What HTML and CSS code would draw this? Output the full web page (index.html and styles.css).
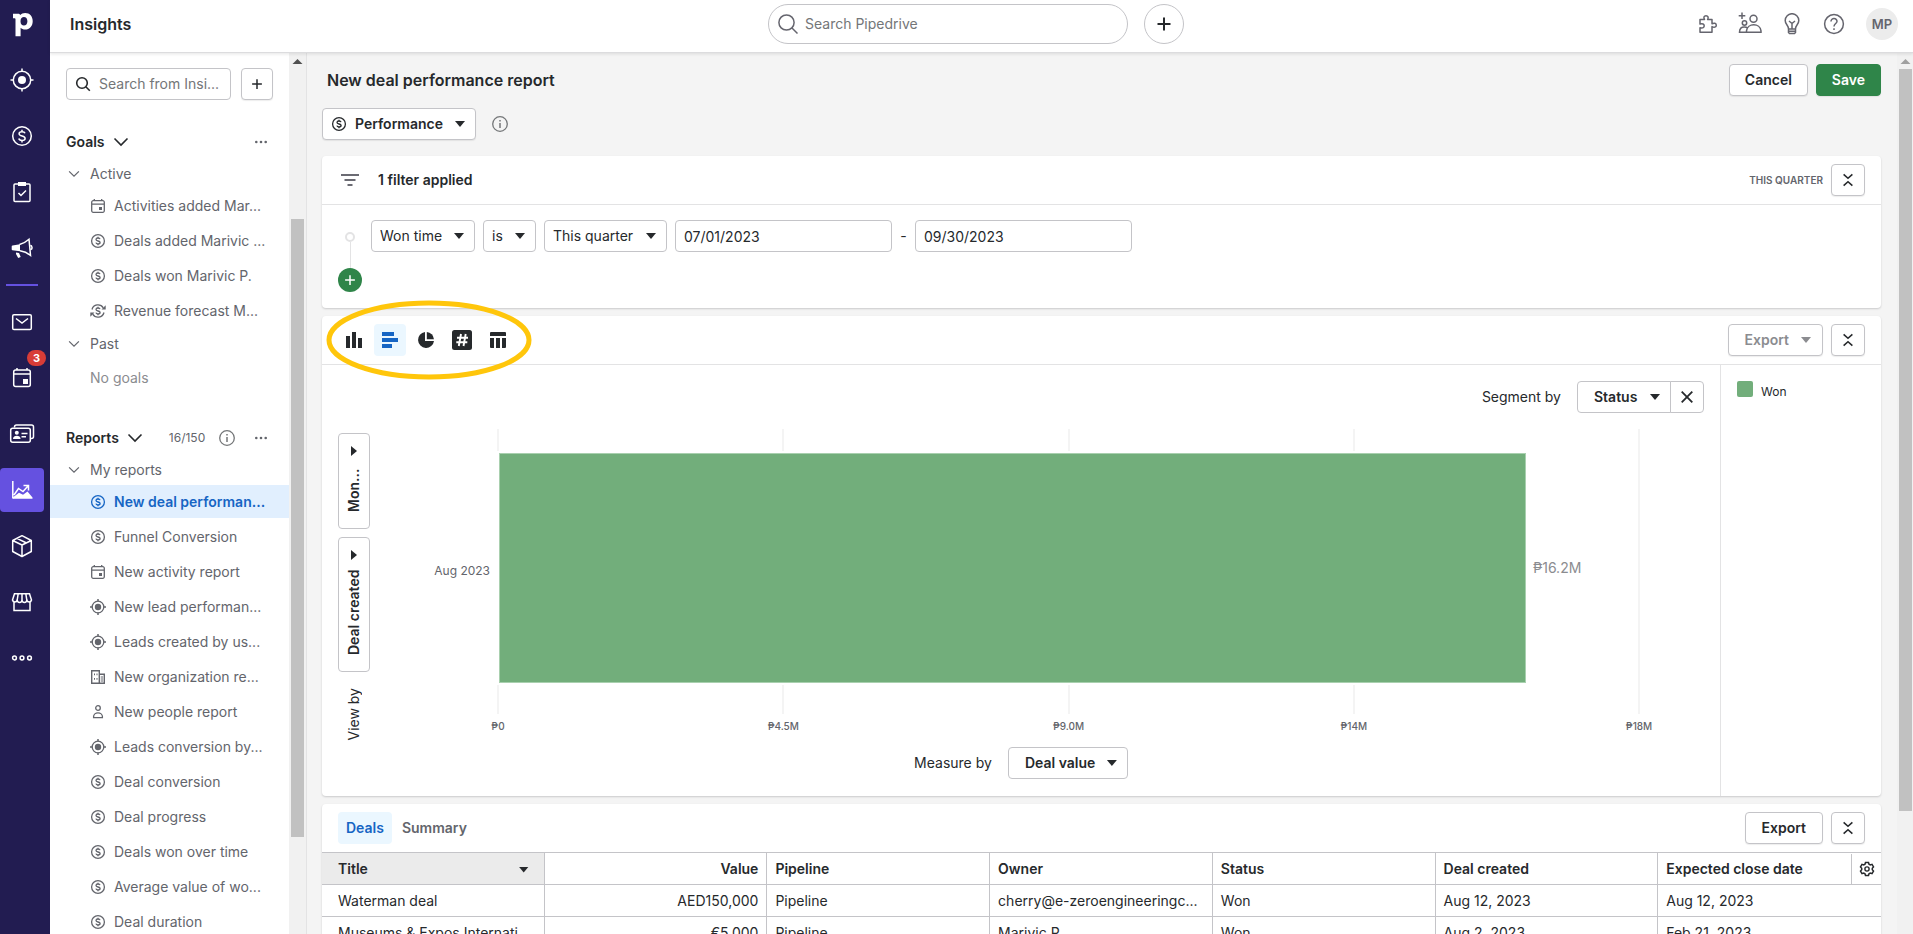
FILE: index.html
```
<!DOCTYPE html>
<html lang="en">
<head>
<meta charset="utf-8">
<title>Insights</title>
<meta name="viewport" content="width=device-width, initial-scale=1">
<link rel="stylesheet" href="styles.css">
</head>
<body>
<svg class="sprite" aria-hidden="true">
  <symbol id="deal" viewBox="0 0 16 16"><circle cx="8" cy="8" r="6.4" fill="none" stroke="currentColor" stroke-width="1.3"/><path d="M10 6.2C9.8 5.4 9 5 8 5 6.800 5 6 5.500 6 6.400c0 2.200 4.100 1 4.100 3.200C10.100 10.500 9.200 11 8 11 6.900 11 6.100 10.600 5.900 9.700M8 3.700V5M8 11v1.300" fill="none" stroke="currentColor" stroke-width="1.300"/></symbol>
  <symbol id="calendar" viewBox="0 0 16 16"><path d="M3.200 2.700h9.600a1.500 1.500 0 0 1 1.500 1.500v8.600a1.500 1.500 0 0 1-1.500 1.500H3.200a1.500 1.500 0 0 1-1.500-1.500V4.200a1.500 1.500 0 0 1 1.500-1.500zM1.700 6.200h12.600M4.300 1v2M11.700 1v2" fill="none" stroke="currentColor" stroke-width="1.300"/><path d="M9 9h3v3H9z" fill="currentColor"/></symbol>
  <symbol id="lead" viewBox="0 0 16 16"><circle cx="8" cy="8" r="5.800" fill="none" stroke="currentColor" stroke-width="1.300"/><circle cx="8" cy="8" r="3.200" fill="currentColor"/><path d="M8 0v2.500M8 13.500V16M0 8h2.500M13.500 8H16" stroke="currentColor" stroke-width="1.500"/></symbol>
  <symbol id="forecast" viewBox="0 0 16 16"><path d="M2 6.500A6.200 6.200 0 0 1 13.300 4.800M14 9.500A6.200 6.200 0 0 1 2.700 11.200" fill="none" stroke="currentColor" stroke-width="1.300"/><path d="M15.700 2.300v4.200h-4.200zM.3 13.700V9.500h4.200z" fill="currentColor"/><path d="M10 6.200C9.800 5.400 9 5 8 5 6.800 5 6 5.500 6 6.400c0 2.200 4.100 1 4.100 3.200C10.100 10.500 9.200 11 8 11 6.900 11 6.100 10.600 5.900 9.700M8 3.700V5M8 11v1.300" fill="none" stroke="currentColor" stroke-width="1.300"/></symbol>
  <symbol id="org" viewBox="0 0 16 16"><path d="M1.700 1.700h7.600v12.600H1.700zM9.300 5.200h5v9.100h-5" fill="none" stroke="currentColor" stroke-width="1.400"/><path d="M4 4.500h1v1.800H4zM6.500 4.500h1v1.800h-1zM4 9h1v1.800H4zM6.500 9h1v1.800h-1zM10.700 7.500H13v1h-2.300zM10.700 9.500H13v1h-2.300zM10.700 11.500H13v1h-2.300z" fill="currentColor"/></symbol>
  <symbol id="person" viewBox="0 0 16 16"><circle cx="8" cy="4" r="2.300" fill="none" stroke="currentColor" stroke-width="1.300"/><path d="M3.600 13.700v-1.200a4.400 3.700 0 0 1 8.800 0v1.200z" fill="none" stroke="currentColor" stroke-width="1.300"/></symbol>
  <symbol id="chevron" viewBox="0 0 16 16"><path d="M1.500 4.500 8 11l6.500-6.500" fill="none" stroke="currentColor" stroke-width="1.600"/></symbol>
  <symbol id="info" viewBox="0 0 16 16"><circle cx="8" cy="8" r="7.300" fill="none" stroke="currentColor" stroke-width="1.300"/><path d="M8 7v5M8 4v1.500" stroke="currentColor" stroke-width="1.500"/></symbol>
  <symbol id="dots" viewBox="0 0 16 16"><circle cx="3.300" cy="8" r="1.300"/><circle cx="8" cy="8" r="1.300"/><circle cx="12.700" cy="8" r="1.300"/></symbol>
  <symbol id="search" viewBox="0 0 20 20"><circle cx="8.500" cy="8.500" r="7.600" fill="none" stroke="currentColor" stroke-width="1.500"/><path d="m14 14 5.500 5.500" stroke="currentColor" stroke-width="1.500"/></symbol>
  <symbol id="plus" viewBox="0 0 16 16"><path d="M8 1.500v13M1.500 8h13" stroke="currentColor" stroke-width="2"/></symbol>
  <symbol id="collapse" viewBox="0 0 16 16"><path d="M3 1.500 8 6l5-4.500M3 14.500 8 10l5 4.500" fill="none" stroke="currentColor" stroke-width="1.800"/></symbol>
</svg>

<div class="app">
  <nav class="rail" aria-label="Main">
    <a class="rail-logo" href="#" aria-label="Home"><svg width="20" height="24" viewBox="0 0 20 24"><path fill="#fff" fill-rule="evenodd" d="M0 .7h5c1.500 0 2 .6 2.200 1.400C8.300.8 10 0 12.200 0 16.800 0 19.700 3.500 19.700 8.300c0 5-3.200 8.300-7.500 8.300-2 0-3.600-.7-4.600-1.800V23.300H2.500V6.200c0-.6-.3-.9-.9-.9H0zM7.500 8.300c0 2.900 1.500 4.300 3.400 4.300 2 0 3.500-1.500 3.500-4.300 0-2.700-1.400-4.200-3.500-4.200-1.800 0-3.400 1.400-3.400 4.200z"/></svg></a>
    <a class="rail-item" href="#" aria-label="Leads"><svg width="24" height="24" viewBox="0 0 24 24"><circle cx="12" cy="12" r="8.700" class="ln"/><circle cx="12" cy="12" r="4" fill="#fff"/><path class="ln" d="M12 .5V4M12 20v3.500M.5 12H4M20 12h3.500"/></svg></a>
    <a class="rail-item" href="#" aria-label="Deals"><svg width="24" height="24" viewBox="0 0 24 24"><circle cx="12" cy="12" r="9.300" class="ln"/><path class="ln" d="M15 9.300C14.700 8.200 13.500 7.700 12 7.700c-1.800 0-2.900.7-2.900 2 0 3.200 6 1.500 6 4.700 0 1.300-1.200 2-3.100 2-1.700 0-2.900-.6-3.200-1.900M12 5.700v2M12 16.400v2"/></svg></a>
    <a class="rail-item" href="#" aria-label="Projects"><svg width="24" height="24" viewBox="0 0 24 24"><rect class="ln" x="4" y="4" width="16" height="17.500" rx="1"/><path d="M8 2h8v4H8z" fill="#fff"/><path class="ln" d="m8.500 13 2.500 2.500 5-5"/></svg></a>
    <a class="rail-item" href="#" aria-label="Campaigns"><svg width="24" height="24" viewBox="0 0 24 24"><path d="M2.500 9.500 10 8.300v6.900l-7.500-.9a1 1 0 0 1-.8-1v-2.800a1 1 0 0 1 .8-1zM6 16.500l3 .4 1.700 4-2.500 1.200L6 18z" fill="#fff"/><path class="ln" d="M9.500 8.500c3.500-.7 6.500-2.500 9.500-5.200l1.500 16c-3-2.300-6.500-3.900-10.500-4.500M20.500 9.500c1.500 0 2.300 3.500.3 4"/></svg></a>
    <hr class="rail-line">
    <a class="rail-item" href="#" aria-label="Mail"><svg width="24" height="24" viewBox="0 0 24 24"><rect class="ln" x="2.700" y="4.700" width="18.600" height="14.800" rx="1.300"/><path class="ln" d="m6 8.500 6 4.500 6-4.500"/></svg></a>
    <a class="rail-item" href="#" aria-label="Activities"><svg width="24" height="24" viewBox="0 0 24 24"><rect class="ln" x="3.700" y="4" width="16.600" height="16.600" rx="2"/><path class="ln" d="M3.700 8h16.600M7 2v2M17 2v2"/><path d="M13 13h5v5h-5z" fill="#fff"/></svg><span class="badge">3</span></a>
    <a class="rail-item" href="#" aria-label="Contacts"><svg width="26" height="24" viewBox="0 0 26 24"><rect class="ln" x="1.700" y="6.200" width="19.600" height="14" rx="2"/><path class="ln" d="M5.500 5.500V5a2 2 0 0 1 2-2h15a2 2 0 0 1 2 2v9.500a2 2 0 0 1-2 2h-.7M12.500 11.500h6M12.500 14.800h4.500"/><circle cx="7.800" cy="10.700" r="2" fill="#fff"/><path d="M4 17c0-4.400 7.600-4.400 7.600 0z" fill="#fff"/></svg></a>
    <a class="rail-item current" href="#" aria-label="Insights" aria-current="page"><svg width="24" height="24" viewBox="0 0 24 24"><path class="ln" d="M2.800 3v17.500M4 17l4.500-6.500 4.500 3 5-5.500M13.500 7.500h5v5"/><path d="M3 20.800v-1.500l6-4.500 4 2 4.500-3.300 5 6v1.300z" fill="#fff"/></svg></a>
    <a class="rail-item" href="#" aria-label="Products"><svg width="24" height="24" viewBox="0 0 24 24"><path class="ln" stroke-linejoin="round" d="m12 1.700 9.300 4.800v11L12 22.500l-9.300-5v-11zM2.700 6.500 12 11l9.300-4.500M12 11v11.500M7 4.300 16.500 9"/></svg></a>
    <a class="rail-item" href="#" aria-label="Marketplace"><svg width="24" height="24" viewBox="0 0 24 24"><path class="ln" d="M4.500 3.700h15l2 6.300a2.400 2.400 0 0 1-4.700 0 2.400 2.400 0 0 1-4.800 0 2.400 2.400 0 0 1-4.800 0 2.400 2.400 0 0 1-4.700 0zM7.200 10l1-6.300M12 10V3.700M16.800 10l-1-6.300M4 12.500v8h16v-8"/></svg></a>
    <a class="rail-item" href="#" aria-label="More"><svg width="24" height="24" viewBox="0 0 24 24"><circle class="ln" cx="4.500" cy="12" r="1.900"/><circle class="ln" cx="12" cy="12" r="1.900"/><circle class="ln" cx="19.500" cy="12" r="1.900"/></svg></a>
  </nav>

  <div class="page">
    <header class="topbar">
      <div class="brand">Insights</div>
      <div class="top-search">
        <label class="pill"><svg width="20" height="20"><use href="#search"/></svg><input type="text" placeholder="Search Pipedrive" aria-label="Search Pipedrive"></label>
        <button class="round" aria-label="Quick add"><svg width="16" height="16"><use href="#plus"/></svg></button>
      </div>
      <div class="top-tools">
        <button class="tool" aria-label="Marketplace"><svg width="20" height="20" viewBox="0 0 20 20"><path class="gl" stroke-linejoin="round" d="M2 5.500h4.500C5.300 3.500 6 1.700 8 1.700s2.800 1.800 1.600 3.800H14v4.300c2-1.200 4.300-.6 4.300 1.400s-2.300 2.600-4.300 1.400v5.700H2v-4.600c3 .8 4.200-.2 4.200-1.900S4.700 9.300 2 10z"/></svg></button>
        <button class="tool" aria-label="Invite users"><svg width="24" height="24" viewBox="0 0 24 24"><circle class="gl" cx="15.500" cy="6.700" r="3.500"/><circle class="gl" cx="6.500" cy="11" r="2.200"/><path class="gl" d="M8.500 20.300v-1.500c1-8 13.500-8 14.500 0v1.500zM8.500 20.300h-7c0-4 2-5.300 4.700-5.300 1.600 0 2.800.5 3.600 1.200M4 .5V7M.7 3.700h6.600"/></svg></button>
        <button class="tool" aria-label="Tips"><svg width="20" height="22" viewBox="0 0 20 22"><path class="gl" d="M6.500 16c0-4-3.300-4.500-3.300-8.500a6.800 6.800 0 0 1 13.600 0c0 4-3.300 4.500-3.300 8.500zM6.500 16v3.500l1 1h5l1-1V16M6.500 18.200h7M10 15.500v-5L7 8M10 10.500 13 8"/></svg></button>
        <button class="tool" aria-label="Help"><svg width="22" height="22" viewBox="0 0 22 22"><circle class="gl" cx="11" cy="11" r="9.400"/><path class="gl" d="M8 8.500c0-4 6.200-3.700 6 0-.2 2-3 2.200-3 5M11 15.300v1.700"/></svg></button>
        <button class="avatar" aria-label="Account">MP</button>
      </div>
    </header>

    <div class="workspace">
      <aside class="side">
        <div class="side-search">
          <label class="field"><svg width="16" height="16" viewBox="0 0 16 16"><circle cx="7" cy="7" r="5.300" fill="none" stroke="currentColor" stroke-width="1.600"/><path d="m10.800 10.800 4 4" stroke="currentColor" stroke-width="1.600"/></svg><input type="text" placeholder="Search from Insi..." aria-label="Search from Insights"></label>
          <button class="btn square" aria-label="Add"><svg width="12" height="12"><use href="#plus"/></svg></button>
        </div>
        <div class="side-head"><h2>Goals</h2><svg width="16" height="16"><use href="#chevron"/></svg><button class="more" aria-label="Goals options"><svg width="16" height="16"><use href="#dots"/></svg></button></div>
        <div class="side-group"><svg width="12" height="12"><use href="#chevron"/></svg>Active</div>
        <ul class="side-list">
          <li><a href="#"><svg><use href="#calendar"/></svg>Activities added Mar...</a></li>
          <li><a href="#"><svg><use href="#deal"/></svg>Deals added Marivic ...</a></li>
          <li><a href="#"><svg><use href="#deal"/></svg>Deals won Marivic P.</a></li>
          <li><a href="#"><svg><use href="#forecast"/></svg>Revenue forecast M...</a></li>
        </ul>
        <div class="side-group"><svg width="12" height="12"><use href="#chevron"/></svg>Past</div>
        <p class="side-empty">No goals</p>
        <div class="side-head reports"><h2>Reports</h2><svg width="16" height="16"><use href="#chevron"/></svg><span class="count">16/150</span><svg class="soft" width="16" height="16"><use href="#info"/></svg><button class="more" aria-label="Reports options"><svg width="16" height="16"><use href="#dots"/></svg></button></div>
        <div class="side-group"><svg width="12" height="12"><use href="#chevron"/></svg>My reports</div>
        <ul class="side-list">
          <li><a class="selected" href="#"><svg><use href="#deal"/></svg>New deal performan...</a></li>
          <li><a href="#"><svg><use href="#deal"/></svg>Funnel Conversion</a></li>
          <li><a href="#"><svg><use href="#calendar"/></svg>New activity report</a></li>
          <li><a href="#"><svg><use href="#lead"/></svg>New lead performan...</a></li>
          <li><a href="#"><svg><use href="#lead"/></svg>Leads created by us...</a></li>
          <li><a href="#"><svg><use href="#org"/></svg>New organization re...</a></li>
          <li><a href="#"><svg><use href="#person"/></svg>New people report</a></li>
          <li><a href="#"><svg><use href="#lead"/></svg>Leads conversion by...</a></li>
          <li><a href="#"><svg><use href="#deal"/></svg>Deal conversion</a></li>
          <li><a href="#"><svg><use href="#deal"/></svg>Deal progress</a></li>
          <li><a href="#"><svg><use href="#deal"/></svg>Deals won over time</a></li>
          <li><a href="#"><svg><use href="#deal"/></svg>Average value of wo...</a></li>
          <li><a href="#"><svg><use href="#deal"/></svg>Deal duration</a></li>
        </ul>
      </aside>
      <div class="track side-track" aria-hidden="true"><i class="up"></i><i class="before"></i><i class="thumb"></i><i class="after"></i></div>

      <main class="main">
        <div class="title-row">
          <h1>New deal performance report</h1>
          <button class="btn strong action">Cancel</button>
          <button class="btn strong action save">Save</button>
        </div>
        <div class="type-row">
          <button class="btn strong type" aria-haspopup="listbox"><svg width="16" height="16"><use href="#deal"/></svg>Performance<i class="caret"></i></button>
          <svg class="soft" width="16" height="16"><use href="#info"/></svg>
        </div>

        <section class="card">
          <div class="card-head filters">
            <svg width="18" height="12" viewBox="0 0 18 12"><path d="M0 1h18M3.500 6h11M6.500 11h5" stroke="#3b3b46" stroke-width="1.600"/></svg>
            <span class="applied">1 filter applied</span>
            <span class="period">THIS QUARTER</span>
            <button class="btn fold" aria-label="Collapse filters"><svg width="14" height="14"><use href="#collapse"/></svg></button>
          </div>
          <div class="filter-body">
            <div class="stem"><i class="node"></i><i class="wire"></i><button class="add" aria-label="Add condition"><svg width="12" height="12"><use href="#plus"/></svg></button></div>
            <div class="conditions">
              <span class="pick pick-field"><select aria-label="Field"><option>Won time</option></select></span>
              <span class="pick pick-op"><select aria-label="Operator"><option>is</option></select></span>
              <span class="pick pick-range"><select aria-label="Period"><option>This quarter</option></select></span>
              <input class="date" type="text" value="07/01/2023" aria-label="From">
              <span class="dash">-</span>
              <input class="date" type="text" value="09/30/2023" aria-label="To">
            </div>
          </div>
        </section>

        <section class="card">
          <div class="card-head">
            <div class="kinds">
              <button aria-label="Column chart"><svg width="16" height="16" viewBox="0 0 16 16"><path d="M0 4h4v12H0zM6 0h4v16H6zM12 6h4v10h-4z"/></svg></button>
              <button class="on" aria-label="Bar chart"><svg width="16" height="16" viewBox="0 0 16 16"><path d="M0 0h12v4H0zM0 6h16v4H0zM0 12h10v4H0z"/></svg></button>
              <button aria-label="Pie chart"><svg width="16" height="16" viewBox="0 0 16 16"><path d="M7 0v9h9A8 8 0 1 1 7 0z"/><path d="M8.800 0A8 8 0 0 1 16 7.200H8.800z"/></svg></button>
              <button aria-label="Scorecard"><svg width="20" height="20" viewBox="0 0 20 20"><rect width="20" height="20" rx="2.500"/><path d="M9 4 6.800 16M13.700 4l-2.200 12M5 7.800h11M4.300 12.200h11" stroke="#fff" stroke-width="1.900"/></svg></button>
              <button aria-label="Table"><svg width="16" height="16" viewBox="0 0 16 16"><path d="M0 1a1 1 0 0 1 1-1h14a1 1 0 0 1 1 1v3H0zM0 6h4v10H1a1 1 0 0 1-1-1zM6 6h4v10H6zM12 6h4v9a1 1 0 0 1-1 1h-3z"/></svg></button>
              <svg class="ring" viewBox="0 0 206 80" aria-hidden="true"><ellipse cx="103" cy="40" rx="100" ry="37" fill="none" stroke="#ffc60b" stroke-width="5"/></svg>
            </div>
            <button class="btn strong export off" disabled>Export<i class="caret"></i></button>
            <button class="btn fold" aria-label="Collapse chart"><svg width="14" height="14"><use href="#collapse"/></svg></button>
          </div>
          <div class="chart-body">
            <div class="chart">
              <div class="segment">
                <label for="segment">Segment by</label>
                <div class="joined"><span class="pick bold pick-status"><select id="segment"><option>Status</option></select></span><button class="btn clear" aria-label="Clear segment"><svg width="12" height="12" viewBox="0 0 12 12"><path d="m.7.700 10.600 10.600M11.300.7.700 11.300" stroke="#26292c" stroke-width="1.800"/></svg></button></div>
              </div>
              <div class="plot-row">
                <div class="view-by">
                  <button class="btn strong vert short" aria-haspopup="listbox"><span>Mon...</span><i class="caret side-caret"></i></button>
                  <button class="btn strong vert" aria-haspopup="listbox"><span>Deal created</span><i class="caret side-caret"></i></button>
                  <span class="vert-text">View by</span>
                </div>
                <div class="cat">Aug 2023</div>
                <div class="plot">
                  <div class="grid">
                    <i></i><i></i><i></i><i></i><i></i>
                    <div class="bar-row"><div class="bar" style="width:90%"></div><span class="bar-value">₱16.2M</span></div>
                  </div>
                  <div class="axis"><span>₱0</span><span>₱4.5M</span><span>₱9.0M</span><span>₱14M</span><span>₱18M</span></div>
                </div>
              </div>
              <div class="measure">
                <label for="measure">Measure by</label>
                <span class="pick bold pick-measure"><select id="measure"><option>Deal value</option></select></span>
              </div>
            </div>
            <div class="legend"><i></i><span>Won</span></div>
          </div>
        </section>

        <section class="card table-card">
          <div class="card-head">
            <div class="tabs"><button class="on">Deals</button><button>Summary</button></div>
            <button class="btn strong export">Export</button>
            <button class="btn fold" aria-label="Collapse table"><svg width="14" height="14"><use href="#collapse"/></svg></button>
          </div>
          <table>
            <thead><tr>
              <th class="sorted">Title<i class="caret"></i></th><th class="num">Value</th><th>Pipeline</th><th>Owner</th><th>Status</th><th>Deal created</th>
              <th class="last"><div>Expected close date<button aria-label="Columns"><svg width="16" height="16" viewBox="0 0 16 16"><path d="M6.500 1.500h3l.5 1.700 1.300.7 1.700-.5 1.500 2.600-1.200 1.200v1.600l1.200 1.200-1.500 2.600-1.700-.5-1.300.7-.5 1.700h-3L6 12.800l-1.300-.7-1.700.5L1.500 10l1.200-1.200V7.200L1.500 6 3 3.400l1.700.5L6 3.200z" fill="none" stroke="#26292c" stroke-width="1.500"/><circle cx="8" cy="8" r="2.100" fill="none" stroke="#26292c" stroke-width="1.400"/></svg></button></div></th>
            </tr></thead>
            <tbody>
              <tr><td>Waterman deal</td><td class="num">AED150,000</td><td>Pipeline</td><td>cherry@e-zeroengineeringc...</td><td>Won</td><td>Aug 12, 2023</td><td>Aug 12, 2023</td></tr>
              <tr><td>Museums &amp; Expos Internati...</td><td class="num">€5,000</td><td>Pipeline</td><td>Marivic P.</td><td>Won</td><td>Aug 2, 2023</td><td>Feb 21, 2023</td></tr>
            </tbody>
          </table>
        </section>
      </main>
      <div class="track main-track" aria-hidden="true"><i class="up"></i><i class="before"></i><i class="thumb"></i><i class="after"></i></div>
    </div>
  </div>
</div>
</body>
</html>
```
FILE: styles.css
```
* { box-sizing: border-box; }
body, h1, h2, p, ul { margin: 0; padding: 0; }
body { font: 400 14px/20px Inter, sans-serif; color: #26292c; background: #fff; overflow: hidden; }
button, input, select { font: inherit; color: inherit; }
button { cursor: pointer; background: none; border: 0; padding: 0; }
svg { display: block; flex: none; }
ul { list-style: none; }
a { color: inherit; text-decoration: none; }
.sprite { display: none; }
.app { display: flex; height: 100vh; }
.page { flex: 1; min-width: 0; display: flex; flex-direction: column; }

/* Navigation rail */
.rail { width: 50px; flex: none; background: #221c51; display: flex; flex-direction: column; }
.rail-logo { height: 52px; padding: 13px 0 0 13px; }
.rail-item { height: 44px; width: 44px; margin: 6px 0; display: flex; align-items: center; justify-content: center; position: relative; flex: none; }
.rail-item.current { background: #6551e0; border-radius: 4px; }
.rail-line { width: 32px; height: 2px; margin: 8px 6px; border: 0; background: #6551e0; flex: none; }
.ln { fill: none; stroke: #fff; stroke-width: 1.5; }
.badge { position: absolute; top: -6px; right: -2px; width: 19px; height: 16px; border-radius: 8px; background: #d83c37; color: #fff; font-size: 11px; font-weight: 700; line-height: 16px; text-align: center; }

/* Top bar */
.topbar { height: 53px; flex: none; display: grid; grid-template-columns: 1fr auto 1fr; align-items: start; padding: 4px 15px 0 20px; border-bottom: 1px solid #dcdcde; box-shadow: 0 1px 3px rgba(38, 41, 44, .12); position: relative; z-index: 1; }
.brand { font-size: 16px; font-weight: 600; line-height: 40px; }
.top-search { display: flex; gap: 16px; margin-right: 16px; }
.pill { width: 360px; height: 40px; border: 1px solid #c4c4c8; border-radius: 20px; display: flex; align-items: center; gap: 7px; padding: 0 9px; color: #65656e; }
.pill input, .field input { border: 0; outline: 0; background: none; padding: 0; min-width: 0; flex: 1; }
.pill input::placeholder, .field input::placeholder { color: #747678; opacity: 1; }
.round { width: 40px; height: 40px; border: 1px solid #c4c4c8; border-radius: 50%; display: grid; place-items: center; }
.top-tools { display: flex; justify-content: flex-end; align-items: center; height: 40px; }
.tool { width: 42px; display: grid; place-items: center; }
.gl { fill: none; stroke: #65656e; stroke-width: 1.5; }
.avatar { width: 32px; height: 32px; border-radius: 50%; background: #ececec; color: #65656e; font-size: 13px; font-weight: 600; margin-left: 11px; }

/* Sidebar */
.workspace { flex: 1; min-height: 0; display: flex; }
.side { width: 239px; flex: none; padding-top: 15px; overflow: hidden; color: #63656c; }
.side-search { display: flex; gap: 10px; padding: 0 16px; margin-bottom: 30px; color: #26292c; }
.field { width: 165px; height: 32px; border: 1px solid #c4c4c8; border-radius: 4px; display: flex; align-items: center; gap: 8px; padding: 0 8px; }
.side-head { display: flex; align-items: center; height: 24px; padding: 0 16px; gap: 8px; color: #26292c; margin-bottom: 8px; }
.side-head h2 { font-size: 14px; font-weight: 600; line-height: 20px; }
.side-head .more { margin-left: auto; margin-right: 4px; fill: #63656c; }
.count { font-size: 12px; color: #63656c; margin-left: 18px; }
.soft { color: #747678; }
.side-head .soft { margin-left: 6px; }
.side-group { display: flex; align-items: center; gap: 10px; height: 24px; padding-left: 18px; margin-bottom: 3px; }
.side-list { display: flex; flex-direction: column; gap: 2px; margin-bottom: 5px; }
.side-list a { height: 33px; display: flex; align-items: center; gap: 8px; padding-left: 40px; white-space: nowrap; }
.side-list svg { width: 16px; height: 16px; }
.side-list .selected { background: #e1effe; color: #1665c4; font-weight: 600; }
.side-empty { padding: 9px 0 0 40px; color: #8b8c90; margin-bottom: 38px; }

/* Scroll tracks */
.track { flex: none; display: flex; flex-direction: column; background: #f1f1f1; padding: 0 2px; }
.track i { display: block; }
.side-track { width: 18px; border-right: 1px solid #e3e3e4; }
.main-track { width: 16px; padding-right: 1px; }
.up { height: 16px; flex: none; background: #505050; clip-path: polygon(50% 6px, calc(50% + 5px) 11px, calc(50% - 5px) 11px); }
.main-track .up { background: #a0a0a0; }
.thumb { background: #c1c1c1; }
.side-track .before { flex: 150; }
.side-track .thumb { flex: 618; }
.side-track .after { flex: 97; }
.main-track .thumb { flex: 742; }
.main-track .after { flex: 123; }

/* Buttons and pickers */
.btn { height: 32px; border: 1px solid #c4c4c8; border-radius: 4px; background: #fff; display: inline-flex; align-items: center; justify-content: center; padding: 0 16px; white-space: nowrap; box-shadow: 0 1px 1px rgba(38, 41, 44, .08); flex: none; }
.strong { font-weight: 600; }
.action { padding: 0 15px; }
.square { width: 32px; padding: 0; }
.fold { width: 34px; padding: 0; }
.caret { flex: none; width: 10px; height: 6px; background: currentColor; clip-path: polygon(0 0, 100% 0, 50% 100%); }
.pick { position: relative; display: flex; align-items: center; height: 32px; flex: none; }
.pick select { appearance: none; width: 100%; height: 32px; border: 1px solid #c4c4c8; border-radius: 4px; background: #fff; padding: 0 24px 0 8px; }
.pick::after { content: ""; position: absolute; right: 11px; width: 10px; height: 6px; background: #26292c; clip-path: polygon(0 0, 100% 0, 50% 100%); pointer-events: none; }
.pick.bold select { font-weight: 600; padding-left: 16px; }
.pick-field { width: 104px; }
.pick-op { width: 53px; }
.pick-range { width: 123px; }
.pick-status { width: 94px; }
.pick-measure { width: 120px; }

/* Main column */
.main { flex: 1; min-width: 0; background: #f4f4f4; padding: 11px 16px 0 15px; overflow: hidden; }
.title-row { display: flex; gap: 8px; align-items: center; margin-bottom: 12px; }
h1 { flex: 1; font-size: 16px; font-weight: 600; line-height: 24px; padding-left: 5px; }
.save { background: #2f8549; border-color: #2f8549; color: #fff; }
.type-row { display: flex; align-items: center; gap: 16px; margin-bottom: 16px; }
.type { padding: 0 10px 0 8px; gap: 8px; }
.type .caret { margin-left: 4px; }
.card { background: #fff; border-radius: 4px; box-shadow: 0 1px 2px rgba(38, 41, 44, .2); margin-bottom: 8px; }
.card-head { height: 49px; display: flex; align-items: center; gap: 8px; padding: 0 16px; border-bottom: 1px solid #e3e3e4; }
.filters { padding-left: 19px; }
.applied { font-weight: 600; margin-left: 11px; flex: 1; }
.period { font-size: 10px; font-weight: 600; color: #63656c; }
.filter-body { display: flex; gap: 9px; padding: 15px 16px 16px; }
.stem { width: 24px; display: flex; flex-direction: column; align-items: center; padding-top: 12px; }
.node { width: 10px; height: 10px; border: 2px solid #e3e3e4; border-radius: 50%; }
.wire { width: 1px; height: 26px; background: #e3e3e4; }
.add { width: 24px; height: 24px; border-radius: 50%; background: #2f8549; color: #fff; display: grid; place-items: center; }
.conditions { display: flex; gap: 8px; align-items: center; height: 32px; }
.date { width: 217px; height: 32px; border: 1px solid #c4c4c8; border-radius: 4px; padding: 0 8px; }
.dash { width: 7px; text-align: center; }

/* Chart card */
.kinds { position: relative; display: flex; gap: 4px; margin-right: auto; }
.kinds button { width: 32px; height: 32px; border-radius: 4px; display: grid; place-items: center; fill: #26292c; }
.kinds .on { background: #ebf7ff; fill: #1665c4; }
.ring { position: absolute; left: -12px; top: -24px; width: 206px; height: 80px; pointer-events: none; }
.off { color: #8b8c90; }
.off .caret { margin-left: 12px; }
.export.off { padding-right: 11px; }
.chart-body { display: flex; }
.chart { flex: 1; min-width: 0; padding: 16px 16px 17px; }
.segment { display: flex; justify-content: flex-end; align-items: center; gap: 16px; margin-bottom: 16px; }
.joined { display: flex; }
.joined select { border-radius: 4px 0 0 4px; }
.clear { width: 34px; padding: 0; margin-left: -1px; border-radius: 0 4px 4px 0; box-shadow: none; }
.plot-row { display: flex; height: 318px; }
.view-by { width: 32px; display: flex; flex-direction: column; align-items: center; gap: 8px; padding-top: 4px; }
.vert { writing-mode: vertical-rl; transform: rotate(180deg); width: 32px; height: 135px; padding: 16px 0 12px; justify-content: space-between; box-shadow: none; }
.vert { padding: 12px 0 16px; padding-block: 0; padding-inline: 16px 12px; }
.short { height: 96px; }
.side-caret { width: 6px; height: 10px; clip-path: polygon(100% 0, 100% 100%, 0 50%); }
.vert-text { writing-mode: vertical-rl; transform: rotate(180deg); margin-top: 8px; }
.cat { width: 127px; padding-right: 7px; display: flex; align-items: center; justify-content: flex-end; font-size: 12px; color: #63656c; padding-bottom: 34px; }
.plot { flex: 1; min-width: 0; padding-right: 64px; display: flex; flex-direction: column; gap: 4px; }
.grid { position: relative; height: 285px; display: flex; justify-content: space-between; }
.grid > i { width: 2px; background: #f4f4f4; }
.bar-row { position: absolute; inset: 24px 0 31px 2px; display: flex; align-items: center; }
.bar { height: 100%; flex: none; background: #72ae7b; border: 1px solid #a9d0af; outline: 2px solid #fff; }
.bar-value { margin-left: 7px; color: #8b8c90; font-size: 14px; }
.axis { display: flex; justify-content: space-between; font-size: 10px; font-weight: 500; line-height: 16px; color: #63656c; }
.axis span { width: 2px; display: flex; justify-content: center; }
.measure { display: flex; align-items: center; justify-content: center; gap: 16px; }
.legend { width: 161px; flex: none; border-left: 1px solid #e3e3e4; padding: 16px; display: flex; gap: 8px; font-size: 12px; }
.legend i { width: 16px; height: 16px; border-radius: 2px; background: #72ae7b; }
.legend span { padding-top: 1px; }

/* Table card */
.table-card { border-radius: 4px 4px 0 0; }
.table-card .card-head { border-bottom-color: #c4c4c8; }
.tabs { display: flex; gap: 2px; margin-right: auto; font-weight: 600; color: #63656c; }
.tabs button { height: 32px; padding: 0 8px; border-radius: 4px; }
.tabs .on { background: #ebf7ff; color: #1665c4; }
table { width: 100%; table-layout: fixed; border-collapse: separate; border-spacing: 0; }
th, td { height: 32px; padding: 0 8px; text-align: left; border-right: 1px solid #c4c4c8; border-bottom: 1px solid #c4c4c8; font-weight: 400; white-space: nowrap; overflow: hidden; text-overflow: ellipsis; }
th { font-weight: 600; }
th:first-child, td:first-child { padding-left: 16px; }
th:last-child, td:last-child { border-right: 0; }
.num { text-align: right; }
.sorted { background: #ebebeb; }
.sorted .caret { float: right; margin: 8px 7px 0 0; }
.last { padding-right: 0; }
.last div { display: flex; justify-content: space-between; align-items: center; }
.last button { width: 30px; height: 30px; border-left: 1px solid #c4c4c8; display: grid; place-items: center; }
```
